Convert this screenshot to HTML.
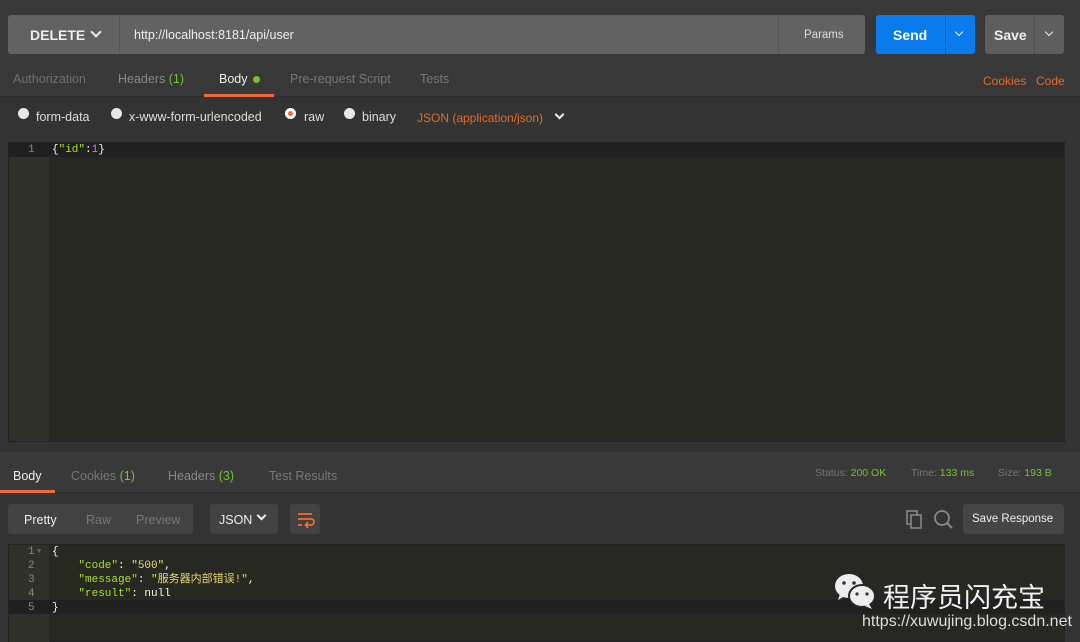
<!DOCTYPE html>
<html><head><meta charset="utf-8"><style>
*{margin:0;padding:0;box-sizing:border-box}
body{width:1080px;height:642px;background:#333;font-family:"Liberation Sans",sans-serif;position:relative;overflow:hidden;font-size:12px;color:#ccc}
.a{position:absolute}
.top{left:0;top:0;width:1080px;height:97px;background:#383838;border-bottom:1px solid #2c2c2c}
.mono{font-family:"Liberation Mono","Noto Sans CJK SC",monospace;font-size:11px}
.chev{display:inline-block;width:8px;height:8px;border-right:2px solid #eee;border-bottom:2px solid #eee;transform:rotate(45deg)}
.radio{width:11px;height:11px;border-radius:50%;background:#e8e8e8}
.g{color:#75c42e}
</style></head><body>
<div class="a top"></div>
<div class="a" style="left:8px;top:15px;width:857px;height:39px;background:#626262;border-radius:3px"></div>
<div class="a" style="left:119px;top:15px;width:1px;height:39px;background:#555"></div>
<div class="a" style="left:778px;top:15px;width:1px;height:39px;background:#555"></div>
<div class="a" style="left:30px;top:27px;font-weight:bold;font-size:14px;color:#eee">DELETE</div>
<div class="a chev" style="left:92px;top:28px"></div>
<div class="a" style="left:134px;top:28px;font-size:12.5px;color:#eee">http://localhost:8181/api/user</div>
<div class="a" style="left:804px;top:29px;font-size:11.5px;color:#ddd">Params</div>
<div class="a" style="left:876px;top:15px;width:99px;height:39px;background:#097bed;border-radius:3px"></div>
<div class="a" style="left:945px;top:15px;width:1px;height:39px;background:#0a63c0"></div>
<div class="a" style="left:893px;top:27px;font-weight:bold;font-size:14px;color:#fff">Send</div>
<div class="a chev" style="left:956px;top:29px;width:6px;height:6px;border-width:1.5px"></div>
<div class="a" style="left:985px;top:15px;width:79px;height:39px;background:#5e5e5e;border-radius:3px"></div>
<div class="a" style="left:1034px;top:15px;width:1px;height:39px;background:#4e4e4e"></div>
<div class="a" style="left:994px;top:27px;font-weight:bold;font-size:14px;color:#eee">Save</div>
<div class="a chev" style="left:1046px;top:29px;width:6px;height:6px;border-width:1.5px"></div>
<div class="a" style="left:13px;top:72px;color:#6f6f6f;font-size:12.5px">Authorization</div>
<div class="a" style="left:118px;top:72px;color:#888;font-size:12.5px">Headers <span class="g">(1)</span></div>
<div class="a" style="left:219px;top:72px;color:#eee;font-size:12.5px">Body</div>
<div class="a" style="left:253px;top:76px;width:7px;height:7px;border-radius:50%;background:#75c42e"></div>
<div class="a" style="left:204px;top:94px;width:70px;height:3px;background:#f26b3a"></div>
<div class="a" style="left:290px;top:72px;color:#777;font-size:12.5px">Pre-request Script</div>
<div class="a" style="left:420px;top:72px;color:#777;font-size:12.5px">Tests</div>
<div class="a" style="left:983px;top:74px;color:#e06c2c">Cookies</div>
<div class="a" style="left:1036px;top:74px;color:#e06c2c">Code</div>
<div class="a radio" style="left:18px;top:108px"></div>
<div class="a" style="left:36px;top:110px;color:#ddd;font-size:12.5px">form-data</div>
<div class="a radio" style="left:111px;top:108px"></div>
<div class="a" style="left:129px;top:110px;color:#ddd;font-size:12.5px">x-www-form-urlencoded</div>
<div class="a radio" style="left:285px;top:108px;background:#fff"></div>
<div class="a" style="left:288px;top:111px;width:5px;height:5px;border-radius:50%;background:#f26b3a"></div>
<div class="a" style="left:304px;top:110px;color:#ddd;font-size:12.5px">raw</div>
<div class="a radio" style="left:344px;top:108px"></div>
<div class="a" style="left:362px;top:110px;color:#ddd;font-size:12.5px">binary</div>
<div class="a" style="left:417px;top:111px;color:#e06c2c">JSON (application/json)</div>
<div class="a chev" style="left:556px;top:111px;width:7px;height:7px"></div>
<div class="a" style="left:8px;top:142px;width:1057px;height:300px;background:#272822;border:1px solid #222"></div>
<div class="a" style="left:9px;top:143px;width:40px;height:298px;background:#2f3129"></div>
<div class="a" style="left:9px;top:143px;width:1055px;height:14px;background:#202020"></div>
<div class="a mono" style="left:28px;top:144px;color:#888">1</div>
<div class="a mono" style="left:52px;top:144px;color:#f8f8f2">{<span style="color:#a6e22e">"id"</span>:<span style="color:#ae81ff">1</span>}</div>
<div class="a" style="left:0;top:452px;width:1080px;height:41px;background:#393939;border-bottom:1px solid #2c2c2c"></div>
<div class="a" style="left:13px;top:469px;color:#eee;font-size:12.5px">Body</div>
<div class="a" style="left:0;top:490px;width:55px;height:3px;background:#f26b3a"></div>
<div class="a" style="left:71px;top:469px;color:#777;font-size:12.5px">Cookies <span class="g">(1)</span></div>
<div class="a" style="left:168px;top:469px;color:#888;font-size:12.5px">Headers <span class="g">(3)</span></div>
<div class="a" style="left:269px;top:469px;color:#777;font-size:12.5px">Test Results</div>
<div class="a" style="left:815px;top:467px;font-size:10.5px;color:#777">Status: <span class="g">200 OK</span></div>
<div class="a" style="left:911px;top:467px;font-size:10.5px;color:#777">Time: <span class="g">133 ms</span></div>
<div class="a" style="left:998px;top:467px;font-size:10.5px;color:#777">Size: <span class="g">193 B</span></div>
<div class="a" style="left:8px;top:504px;width:185px;height:30px;background:#424242;border-radius:3px"></div>
<div class="a" style="left:24px;top:513px;color:#eee;font-size:12.5px">Pretty</div>
<div class="a" style="left:86px;top:513px;color:#777;font-size:12.5px">Raw</div>
<div class="a" style="left:136px;top:513px;color:#777;font-size:12.5px">Preview</div>
<div class="a" style="left:210px;top:504px;width:68px;height:30px;background:#424242;border-radius:3px"></div>
<div class="a" style="left:219px;top:513px;color:#eee;font-size:12.5px">JSON</div>
<div class="a chev" style="left:258px;top:512px;width:7px;height:7px"></div>
<div class="a" style="left:290px;top:504px;width:30px;height:30px;background:#424242;border-radius:3px"></div>
<svg class="a" style="left:290px;top:504px" width="30" height="30"><path d="M8 10h14M8 15h13a3 3 0 0 1 0 6h-5M18 18l-2.5 3 2.5 3M8 21h4" stroke="#f26b3a" stroke-width="1.8" fill="none"/></svg>
<svg class="a" style="left:904px;top:508px" width="22" height="22"><rect x="3" y="3" width="10" height="13" fill="none" stroke="#888" stroke-width="1.6"/><rect x="7" y="7" width="10" height="13" fill="#333" stroke="#888" stroke-width="1.6"/></svg>
<svg class="a" style="left:932px;top:508px" width="22" height="22"><circle cx="10" cy="10" r="7" fill="none" stroke="#888" stroke-width="1.8"/><path d="M15 15l5 5" stroke="#888" stroke-width="2"/></svg>
<div class="a" style="left:963px;top:504px;width:101px;height:30px;background:#454545;border-radius:3px"></div>
<div class="a" style="left:972px;top:513px;color:#eee;font-size:11.5px">Save Response</div>
<div class="a" style="left:8px;top:544px;width:1057px;height:98px;background:#272822;border:1px solid #222"></div>
<div class="a" style="left:9px;top:545px;width:40px;height:97px;background:#2f3129"></div>
<div class="a" style="left:9px;top:600px;width:1055px;height:14px;background:#202020"></div>
<div class="a mono" style="left:28px;top:545px;color:#888;line-height:14px">1<br>2<br>3<br>4<br>5</div>
<div class="a mono" style="left:37px;top:545px;color:#666;font-size:7px;line-height:14px">▼</div>
<div class="a mono" style="left:52px;top:545px;color:#f8f8f2;line-height:14px;white-space:pre">{
    <span style="color:#a6e22e">"code"</span>: <span style="color:#e6db74">"500"</span>,
    <span style="color:#a6e22e">"message"</span>: <span style="color:#e6db74">"服务器内部错误!"</span>,
    <span style="color:#a6e22e">"result"</span>: null
}</div>
<svg class="a" style="left:834px;top:573px" width="44" height="38"><ellipse cx="15" cy="13" rx="14" ry="12" fill="#eee"/><path d="M6 21l-2 6 7-4z" fill="#eee"/><ellipse cx="28" cy="23" rx="13" ry="11" fill="#eee" stroke="#272822" stroke-width="2"/><path d="M35 31l3 5-7-3z" fill="#eee"/><circle cx="10" cy="10" r="1.8" fill="#333"/><circle cx="20" cy="10" r="1.8" fill="#333"/><circle cx="23" cy="21" r="1.6" fill="#333"/><circle cx="33" cy="21" r="1.6" fill="#333"/></svg>
<div class="a" style="left:883px;top:576px;font-family:'Liberation Sans','Noto Sans CJK SC',sans-serif;font-size:27px;color:#f2f2f2">程序员闪充宝</div>
<div class="a" style="left:862px;top:613px;font-size:16px;color:#ddd">https://xuwujing.blog.csdn.net</div>
</body></html>
